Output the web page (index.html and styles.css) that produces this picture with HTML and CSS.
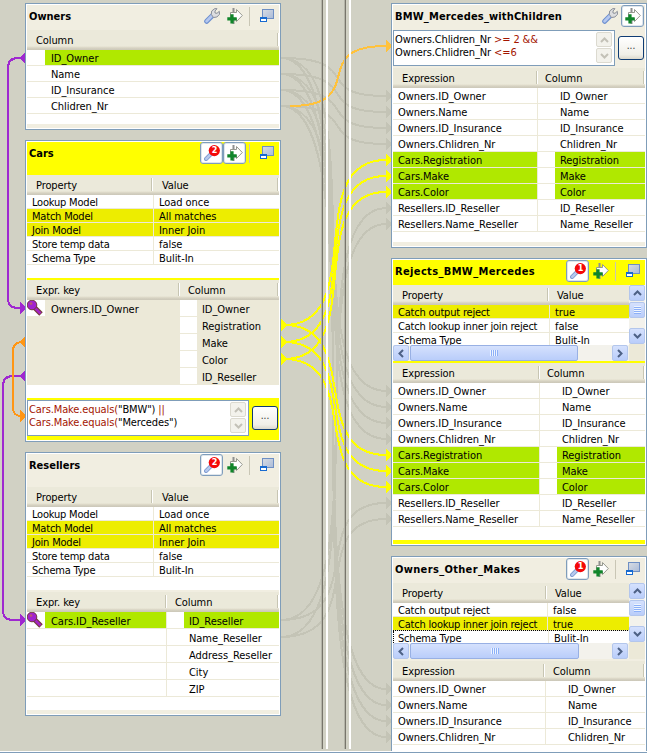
FILE: index.html
```html
<!DOCTYPE html>
<html lang="en">
<head>
<meta charset="utf-8">
<title>Mapping editor</title>
<link rel="stylesheet" href="styles.css">
</head>
<body>
<svg class="defs" width="0" height="0" aria-hidden="true">
  <defs>
    <linearGradient id="win" x1="0" y1="0" x2="1" y2="1"><stop offset="0" stop-color="#d9dde3"/><stop offset="1" stop-color="#a9bad8"/></linearGradient>
    <symbol id="wrench" viewBox="0 0 16 16">
      <path d="M2.7 13.3 8.5 7.5" stroke="#6d8fcf" stroke-width="5" stroke-linecap="round"/>
      <path d="M2.6 13.2 8.5 7.3" stroke="#b4c7ef" stroke-width="2.8" stroke-linecap="round"/>
      <path d="M7.3 6.4 7.7 3 10.8.6 13 .7 11 3v2l2 .3 2.3-2 .2 3-2.6 2.7-3.4.5z" fill="#dcdde0" stroke="#8a8f99"/>
    </symbol>
    <symbol id="lens" viewBox="0 0 16 16">
      <path d="M2 14 8 8" stroke="#7f9bd0" stroke-width="4" stroke-linecap="round"/>
      <path d="M2.2 13.8 7.5 8.5" stroke="#b7caee" stroke-width="2.4" stroke-linecap="round"/>
      <circle cx="10.3" cy="5.6" r="5.6" fill="#f40909"/>
    </symbol>
    <symbol id="add" viewBox="0 0 16 16">
      <path d="M6.5 0v5M6.5 10v6" stroke="#8f9090" stroke-width="2"/>
      <path d="M3.5 4.5h6v-3l5.8 6-5.8 6v-3h-6z" fill="#fff" stroke="#96988f"/>
      <path d="M5 6.3v9.2M.3 10.9h9.4" stroke="#10852a" stroke-width="3.2"/>
    </symbol>
    <symbol id="restore" viewBox="0 0 14 13">
      <rect x="2.5" y=".5" width="11" height="9" fill="url(#win)" stroke="#6e8fc4"/>
      <rect x=".5" y="8.5" width="6" height="4" fill="#fff" stroke="#176ad0"/>
      <path d="M0 9h7" stroke="#176ad0" stroke-width="2"/>
    </symbol>
    <symbol id="key" viewBox="0 0 16 16">
      <path d="M7 7l7 7" stroke="#743a39" stroke-width="5"/>
      <path d="M7 7l6.5 6.5" stroke="#a525c4" stroke-width="2.6"/>
      <circle cx="5" cy="5" r="4.8" fill="#a222cf" stroke="#743a39"/>
      <circle cx="4" cy="3.6" r="1.4" fill="#bc5475"/>
    </symbol>
    <symbol id="up" viewBox="0 0 9 6"><path d="M1 5l3.5-3.5L8 5" fill="none" stroke="currentColor" stroke-width="2"/></symbol>
    <symbol id="down" viewBox="0 0 9 6"><path d="M1 1l3.5 3.5L8 1" fill="none" stroke="currentColor" stroke-width="2"/></symbol>
    <symbol id="left" viewBox="0 0 6 9"><path d="M5 1 1.5 4.5 5 8" fill="none" stroke="currentColor" stroke-width="2"/></symbol>
    <symbol id="right" viewBox="0 0 6 9"><path d="M1 1l3.5 3.5L1 8" fill="none" stroke="currentColor" stroke-width="2"/></symbol>
  </defs>
</svg>

<svg class="links" width="647" height="753" viewBox="0 0 647 753" aria-hidden="true">
  <g class="idle">
    <path d="M281 58C366 58 310 96 386 96M281 74C366 74 310 112 386 112M281 90C366 90 310 128 386 128M281 106C366 106 310 144 386 144"/>
    <path d="M281 58C376 58 290 391 386 391M281 74C376 74 290 407 386 407M281 90C376 90 290 423 386 423M281 106C376 106 290 439 386 439"/>
    <path d="M281 58C384 58 282 689 386 689M281 74C384 74 282 705 386 705M281 90C384 90 282 721 386 721M281 106C384 106 282 737 386 737"/>
    <path d="M281 620C384 620 290 208 386 208M281 637C384 637 290 224 386 224M281 620C370 620 305 503 386 503M281 637C370 637 305 519 386 519"/>
  </g>
  <g class="idle-tip">
    <path d="M386 90l6 6-6 6zM386 106l6 6-6 6zM386 122l6 6-6 6zM386 138l6 6-6 6zM386 202l6 6-6 6zM386 218l6 6-6 6z"/>
    <path d="M386 385l6 6-6 6zM386 401l6 6-6 6zM386 417l6 6-6 6zM386 433l6 6-6 6zM386 497l6 6-6 6zM386 513l6 6-6 6z"/>
    <path d="M386 683l6 6-6 6zM386 699l6 6-6 6zM386 715l6 6-6 6zM386 731l6 6-6 6z"/>
  </g>
  <path class="filter" d="M290 106C371 106 306 46 386 46"/>
  <path class="filter-tip" d="M386 40l6 6-6 6z"/>
  <g class="active">
    <path d="M284 325C370 325 300 160 386 160M284 342C370 342 300 176 386 176M284 359C370 359 300 192 386 192"/>
    <path d="M284 325C364 325 306 455 386 455M284 342C364 342 306 471 386 471M284 359C364 359 306 487 386 487"/>
  </g>
  <g class="active-tip">
    <path d="M281 319l6 6-6 6zM281 336l6 6-6 6zM281 353l6 6-6 6z"/>
    <path d="M386 154l6 6-6 6zM386 170l6 6-6 6zM386 186l6 6-6 6zM386 449l6 6-6 6zM386 465l6 6-6 6zM386 481l6 6-6 6z"/>
  </g>
  <path class="join" d="M21 58H18Q8 58 8 68V298Q8 308 18 308H21M21 376H13Q3 376 3 386V610Q3 620 13 620H21"/>
  <path class="join-tip" d="M25 52l-6 6 6 6zM25 370l-6 6 6 6zM20 302l6 6-6 6zM20 614l6 6-6 6z"/>
  <path class="cond" d="M21 342Q13 343 13 351V407Q13 416 21 416"/>
  <path class="cond-tip" d="M25 336l-6 6 6 6zM20 410l6 6-6 6z"/>
</svg>

<main class="editor">
  <section class="pane pane-left">
    <article class="panel owners">
      <header class="bar short"><h2>Owners</h2><span class="tool"><svg class="i16"><use href="#wrench"/></svg></span><span class="tool"><svg class="i16"><use href="#add"/></svg></span><i class="rule"></i><svg class="restore"><use href="#restore"/></svg></header>
      <div class="head"><b>Column</b></div>
      <div class="rows fields">
        <div class="row"><i></i><span class="on">ID_Owner</span></div>
        <div class="row"><i></i><span>Name</span></div>
        <div class="row"><i></i><span>ID_Insurance</span></div>
        <div class="row"><i></i><span>Chlidren_Nr</span></div>
      </div>
      <div class="foot"></div>
    </article>

    <article class="panel cars lit">
      <header class="bar"><h2>Cars</h2><span class="tool boxed"><svg class="i16"><use href="#lens"/></svg><em>2</em></span><span class="tool boxed"><svg class="i16"><use href="#add"/></svg></span><i class="rule"></i><svg class="restore"><use href="#restore"/></svg></header>
      <div class="head"><b>Property</b><b>Value</b></div>
      <div class="rows props">
        <div class="row"><span>Lookup Model</span><span>Load once</span></div>
        <div class="row hot"><span>Match Model</span><span>All matches</span></div>
        <div class="row hot"><span>Join Model</span><span>Inner Join</span></div>
        <div class="row"><span>Store temp data</span><span>false</span></div>
        <div class="row"><span>Schema Type</span><span>Bulit-In</span></div>
      </div>
      <div class="gap"></div>
      <div class="head"><b>Expr. key</b><b>Column</b></div>
      <div class="rows keys shaded">
        <div class="row"><i><svg class="i16"><use href="#key"/></svg></i><span>Owners.ID_Owner</span><i></i><span>ID_Owner</span></div>
        <div class="row"><span class="wide"></span><i></i><span>Registration</span></div>
        <div class="row"><span class="wide"></span><i></i><span>Make</span></div>
        <div class="row"><span class="wide"></span><i></i><span>Color</span></div>
        <div class="row"><span class="wide"></span><i></i><span>ID_Reseller</span></div>
      </div>
      <div class="blank"></div>
      <div class="expr">
        <div class="box"><p><q>Cars.Make.equals(</q>"BMW") <q>||</q><br><q>Cars.Make.equals(</q>"Mercedes")</p><div class="mini"><span><svg><use href="#up"/></svg></span><span><svg><use href="#down"/></svg></span></div></div>
        <button>...</button>
      </div>
    </article>

    <article class="panel resellers">
      <header class="bar"><h2>Resellers</h2><span class="tool boxed"><svg class="i16"><use href="#lens"/></svg><em>2</em></span><span class="tool"><svg class="i16"><use href="#add"/></svg></span><i class="rule"></i><svg class="restore"><use href="#restore"/></svg></header>
      <div class="head"><b>Property</b><b>Value</b></div>
      <div class="rows props">
        <div class="row"><span>Lookup Model</span><span>Load once</span></div>
        <div class="row hot"><span>Match Model</span><span>All matches</span></div>
        <div class="row hot"><span>Join Model</span><span>Inner Join</span></div>
        <div class="row"><span>Store temp data</span><span>false</span></div>
        <div class="row"><span>Schema Type</span><span>Bulit-In</span></div>
      </div>
      <div class="gap"></div>
      <div class="head"><b>Expr. key</b><b>Column</b></div>
      <div class="rows keys">
        <div class="row"><i><svg class="i16"><use href="#key"/></svg></i><span class="on">Cars.ID_Reseller</span><i></i><span class="on">ID_Reseller</span></div>
        <div class="row"><span class="wide"></span><i></i><span>Name_Reseller</span></div>
        <div class="row"><span class="wide"></span><i></i><span>Address_Reseller</span></div>
        <div class="row"><span class="wide"></span><i></i><span>City</span></div>
        <div class="row"><span class="wide"></span><i></i><span>ZIP</span></div>
      </div>
      <div class="blank"></div>
      <div class="foot"></div>
    </article>
  </section>

  <div class="splitter first"></div>
  <div class="channel"></div>
  <div class="splitter second"></div>

  <section class="pane pane-right">
    <article class="panel children">
      <header class="bar short"><h2>BMW_Mercedes_withChildren</h2><span class="tool"><svg class="i16"><use href="#wrench"/></svg></span><span class="tool boxed"><svg class="i16"><use href="#add"/></svg></span></header>
      <div class="expr">
        <div class="box"><p>Owners.Chlidren_Nr <q>&gt;= 2 &amp;&amp;</q><br>Owners.Chlidren_Nr <q>&lt;=6</q></p><div class="mini"><span><svg><use href="#up"/></svg></span><span><svg><use href="#down"/></svg></span></div></div>
        <button>...</button>
      </div>
      <div class="head"><b>Expression</b><b>Column</b></div>
      <div class="rows maps">
        <div class="row"><span>Owners.ID_Owner</span><i></i><span>ID_Owner</span></div>
        <div class="row"><span>Owners.Name</span><i></i><span>Name</span></div>
        <div class="row"><span>Owners.ID_Insurance</span><i></i><span>ID_Insurance</span></div>
        <div class="row"><span>Owners.Chlidren_Nr</span><i></i><span>Chlidren_Nr</span></div>
        <div class="row"><span class="on">Cars.Registration</span><i></i><span class="on">Registration</span></div>
        <div class="row"><span class="on">Cars.Make</span><i></i><span class="on">Make</span></div>
        <div class="row"><span class="on">Cars.Color</span><i></i><span class="on">Color</span></div>
        <div class="row"><span>Resellers.ID_Reseller</span><i></i><span>ID_Reseller</span></div>
        <div class="row"><span>Resellers.Name_Reseller</span><i></i><span>Name_Reseller</span></div>
      </div>
      <div class="foot"></div>
    </article>

    <article class="panel rejects lit">
      <header class="bar short"><h2>Rejects_BMW_Mercedes</h2><span class="tool boxed"><svg class="i16"><use href="#lens"/></svg><em>1</em></span><span class="tool"><svg class="i16"><use href="#add"/></svg></span><i class="rule"></i><svg class="restore"><use href="#restore"/></svg></header>
      <div class="scroller">
        <div class="view">
          <div class="head"><b>Property</b><b>Value</b></div>
          <div class="rows props clip">
            <div class="row hot"><span>Catch output reject</span><span>true</span></div>
            <div class="row"><span>Catch lookup inner join reject</span><span>false</span></div>
            <div class="row"><span>Schema Type</span><span>Bulit-In</span></div>
          </div>
          <div class="hbar"><span><svg class="side"><use href="#left"/></svg></span><span class="thumb"></span><span><svg class="side"><use href="#right"/></svg></span></div>
        </div>
        <div class="vbar"><span><svg class="flat"><use href="#up"/></svg></span><span class="thumb"></span><span><svg class="flat"><use href="#down"/></svg></span></div>
      </div>
      <div class="head"><b>Expression</b><b>Column</b></div>
      <div class="rows maps">
        <div class="row"><span>Owners.ID_Owner</span><i></i><span>ID_Owner</span></div>
        <div class="row"><span>Owners.Name</span><i></i><span>Name</span></div>
        <div class="row"><span>Owners.ID_Insurance</span><i></i><span>ID_Insurance</span></div>
        <div class="row"><span>Owners.Chlidren_Nr</span><i></i><span>Chlidren_Nr</span></div>
        <div class="row"><span class="on">Cars.Registration</span><i></i><span class="on">Registration</span></div>
        <div class="row"><span class="on">Cars.Make</span><i></i><span class="on">Make</span></div>
        <div class="row"><span class="on">Cars.Color</span><i></i><span class="on">Color</span></div>
        <div class="row"><span>Resellers.ID_Reseller</span><i></i><span>ID_Reseller</span></div>
        <div class="row"><span>Resellers.Name_Reseller</span><i></i><span>Name_Reseller</span></div>
      </div>
      <div class="foot"></div>
    </article>

    <article class="panel others">
      <header class="bar short"><h2>Owners_Other_Makes</h2><span class="tool boxed"><svg class="i16"><use href="#lens"/></svg><em>1</em></span><span class="tool"><svg class="i16"><use href="#add"/></svg></span><i class="rule"></i><svg class="restore"><use href="#restore"/></svg></header>
      <div class="scroller">
        <div class="view">
          <div class="head"><b>Property</b><b>Value</b></div>
          <div class="rows props clip">
            <div class="row"><span>Catch output reject</span><span>false</span></div>
            <div class="row hot"><span>Catch lookup inner join reject</span><span>true</span></div>
            <div class="row focus"><span>Schema Type</span><span>Bulit-In</span></div>
          </div>
          <div class="hbar"><span><svg class="side"><use href="#left"/></svg></span><span class="thumb"></span><span><svg class="side"><use href="#right"/></svg></span></div>
        </div>
        <div class="vbar"><span><svg class="flat"><use href="#up"/></svg></span><span class="thumb"></span><span><svg class="flat"><use href="#down"/></svg></span></div>
      </div>
      <div class="head"><b>Expression</b><b>Column</b></div>
      <div class="rows maps">
        <div class="row"><span>Owners.ID_Owner</span><i></i><span>ID_Owner</span></div>
        <div class="row"><span>Owners.Name</span><i></i><span>Name</span></div>
        <div class="row"><span>Owners.ID_Insurance</span><i></i><span>ID_Insurance</span></div>
        <div class="row"><span>Owners.Chlidren_Nr</span><i></i><span>Chlidren_Nr</span></div>
      </div>
    </article>
  </section>
</main>
<div class="edge"></div>
</body>
</html>
```
FILE: styles.css
```css
* { box-sizing: border-box; }

body {
  margin: 0;
  width: 647px;
  height: 753px;
  overflow: hidden;
  position: relative;
  background: #d1d1c4;
  color: #000;
  font: 11px/14px "DejaVu Sans Condensed", "DejaVu Sans", sans-serif;
}

.defs { position: absolute; }
.links { position: absolute; left: 0; top: 0; fill: none; shape-rendering: crispEdges; }
.idle { stroke: #c4c4b6; stroke-width: 2; }
.idle-tip { fill: #c4c4b6; }
.filter { stroke: #ffc23c; stroke-width: 2; }
.filter-tip { fill: #ffc23c; }
.active { stroke: #ff0; stroke-width: 2; }
.active-tip { fill: #ff0; }
.join { stroke: #9f28d0; stroke-width: 2; }
.join-tip { fill: #9f28d0; }
.cond { stroke: #ff9614; stroke-width: 2; }
.cond-tip { fill: #ff9614; }

.editor { position: relative; display: flex; height: 751px; overflow: hidden; }
.edge { position: relative; height: 2px; border-top: 1px solid #fff; background: #7f9db9; }

.pane { display: flex; flex-direction: column; gap: 10px; padding-top: 3px; flex: none; }
.pane-left { width: 321px; padding-left: 25px; }
.pane-right { width: 296px; padding-left: 40px; }
.channel { width: 16px; }
.splitter { flex: none; width: 7px; height: 749px; border-left: 1px solid #b4b4a8; border-right: 2px solid #fff; box-shadow: inset 1px 0 #77756b; }

.panel { flex: none; width: 256px; border: 1px solid #7f9db9; padding: 1px; background: #fff; display: flex; flex-direction: column; }
.owners { height: 127px; }
.cars { height: 302px; }
.resellers { height: 264px; }
.children { height: 245px; }
.rejects { height: 288px; }
.others { height: 220px; }

.bar { display: flex; height: 33px; flex: none; background: #f1eee1; align-items: flex-start; }
.bar.short { height: 25px; }
.lit .bar { background: #ff0; }
.bar h2 { margin: 0 auto 0 0; padding-left: 2px; font-size: 11px; line-height: 24px; font-weight: bold; }
.children h2 { letter-spacing: .16px; }
.rejects h2 { letter-spacing: .36px; }
.others h2 { letter-spacing: .34px; }
.tool { width: 23px; height: 22px; position: relative; display: flex; align-items: center; justify-content: center; }
.tool.boxed { background: #fff; border: 1px solid #7f9dbb; border-radius: 3px; box-shadow: inset 0 0 0 1px #dfe6ec; }
.tool em { position: absolute; left: 10px; top: 2px; width: 7px; color: #fff; font: bold 9px/11px "DejaVu Sans Condensed", sans-serif; text-align: center; }
.i16 { width: 16px; height: 16px; display: block; fill: none; }
.rule { width: 1px; height: 19px; margin: 2px 10px 0 3px; background: #c9c6b5; }
.restore { width: 14px; height: 13px; margin: 4px 5px 0 0; }
.children .tool:last-child { margin-right: 1px; }

.head {
  display: flex; flex: none; height: 20px; padding: 3px 1px 0 0;
  background: linear-gradient(#ebe9da 16px, #e2decd 17px, #d6d2c2 18px, #cbc7b8 20px);
}
.head b { height: 13px; line-height: 16px; font-weight: normal; letter-spacing: -.1px; padding-left: 9px; border-right: 1px solid #c7c5b2; box-shadow: 1px 0 #fff; }
.head b:first-child { width: 125px; }
.head b:last-child { flex: 1; padding-left: 10px; }
.head b:only-child { padding-left: 9px; width: auto; }
.view .head b:last-child { border: 0; box-shadow: none; }
.cars .gap + .head b:first-child { width: 152px; }
.resellers .gap + .head b:first-child { width: 139px; }
.gap + .head b:last-child { padding-left: 9px; }
.children .head b:first-child { width: 144px; }
.children .head b:last-child { padding-left: 8px; }
.rejects .head b:first-child { width: 146px; }
.rejects .head b:last-child { padding-left: 8px; }
.others .head b:first-child { width: 151px; }
.others .head b:last-child { padding-left: 9px; }
.rejects .view .head b:first-child { width: 155px; }
.rejects .view .head b:last-child { padding-left: 9px; }
.others .view .head b:first-child { width: 153px; }

.rows { flex: none; }
.row { display: grid; grid-template-rows: 100%; white-space: nowrap; border-bottom: 1px solid #ece9d8; height: 16px; }
.row > span { padding-left: 5px; line-height: 17px; overflow: hidden; letter-spacing: -.05px; }
.row > i { background: #fff; }
.row .on { background: #b0e800; }
.fields .row { grid-template-columns: 18px 1fr; }
.fields .row > span { padding-left: 6px; }
.props .row { grid-template-columns: 127px 1fr; height: 14px; }
.props .row > span { line-height: 15px; }
.props .row > span:first-child { border-right: 1px solid #ece9d8; letter-spacing: -.2px; }
.hot { background: #eded00; }
.rejects .props .row { grid-template-columns: 157px 1fr; }
.others .props .row { grid-template-columns: 155px 1fr; }
.clip { height: 40px; overflow: hidden; background: #fff; }
.focus { position: relative; outline: 1px dotted #000; outline-offset: 0; }
.others .focus { border-left: 1px dotted #000; grid-template-columns: 154px 1fr; }
.others .focus > span:first-child { padding-left: 4px; }

.keys .row { height: 17px; }
.keys .row > span { line-height: 19px; }
.keys .row > span:nth-child(2) { padding-left: 6px; }
.wide { grid-column: span 2; }
.cars .keys .row { grid-template-columns: 18px 135px 17px 1fr; }
.resellers .keys .row { grid-template-columns: 18px 122px 17px 1fr; }
.resellers .keys .row > i:nth-last-child(2) { border-left: 1px solid #ece9d8; margin-left: -1px; }
.shaded { background: #ece9d8; }

.maps .row > span:first-child { border-right: 1px solid #ece9d8; }
.children .maps .row { grid-template-columns: 145px 17px 1fr; }
.rejects .maps .row { grid-template-columns: 147px 17px 1fr; }
.others .maps .row { grid-template-columns: 153px 17px 1fr; }

.gap { height: 15px; flex: none; border-bottom: 2px solid #f1eee1; }
.lit .gap { border-color: #ff0; }
.blank { height: 13px; flex: none; }
.foot { height: 4px; flex: none; margin-top: auto; background: #f1eee1; }
.lit .foot { background: #ff0; }

.expr { display: flex; flex: none; height: 38px; background: #f1eee1; }
.lit .expr { background: #ff0; height: 42px; padding-top: 2px; }
.box { width: 222px; height: 36px; padding: 1px; border: 1px solid #7f9db9; background: #fff; display: flex; justify-content: space-between; }
.box p { margin: 0; padding-top: 1px; line-height: 13px; white-space: nowrap; letter-spacing: -.12px; }
.box q { quotes: none; color: #a31500; }
.mini { display: flex; flex-direction: column; gap: 1px; width: 17px; }
.mini span { height: 15px; width: 16px; border: 1px solid #dcdad0; border-radius: 2px; background: #f3f2ec; color: #c3c1b7; display: flex; align-items: center; justify-content: center; }
.mini svg, .flat { width: 9px; height: 6px; }
.side { width: 6px; height: 9px; }
button { width: 26px; height: 24px; margin: 6px 0 0 3px; padding: 0 0 5px; border: 1px solid #0f3c74; border-radius: 3px; background: linear-gradient(#fff, #f0efe8 80%, #dcd9cd); font: 10px/14px "DejaVu Sans Condensed", sans-serif; color: #333; }

.scroller { display: flex; height: 78px; flex: none; border-bottom: 2px solid #f1eee1; background: #ece9d8; }
.lit .scroller { border-color: #ff0; }
.view { width: 236px; }
.hbar { height: 16px; display: flex; background: #f3f2ec; padding-right: 1px; }
.hbar span, .vbar span { width: 16px; height: 16px; flex: none; border: 1px solid #b3c6ec; border-radius: 2px; background: linear-gradient(#d5e1fd, #b9cdfa); color: #4d6185; display: flex; align-items: center; justify-content: center; }
.hbar span:last-child { margin-left: auto; }
.hbar .thumb { width: 168px; margin-left: 1px; border-color: #98b0e4; }
.others .hbar .thumb { width: 169px; }
.hbar .thumb::after { content: ""; width: 8px; height: 6px; background: repeating-linear-gradient(90deg, #eef4fe 0 1px, #8cb0f8 1px 2px); }
.vbar { width: 16px; height: 59px; display: flex; flex-direction: column; background: #f3f2ec; }
.vbar .thumb { margin-top: 1px; }
.vbar .thumb::after { content: ""; width: 7px; height: 8px; background: repeating-linear-gradient(#eef4fe 0 1px, #8cb0f8 1px 2px); }
.vbar span:last-child { margin-top: auto; }
```
